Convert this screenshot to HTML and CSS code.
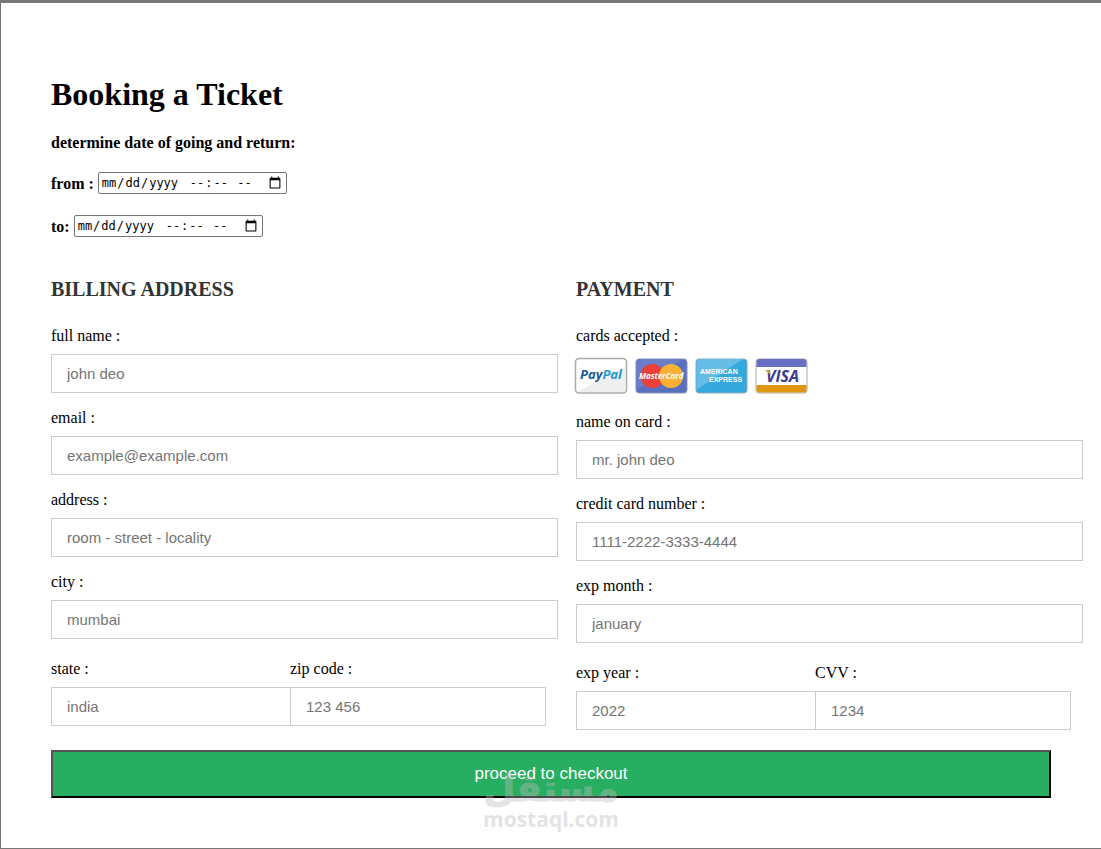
FILE: index.html
```html
<!DOCTYPE html>
<html lang="en">
<head>
<meta charset="utf-8">
<title>Booking a Ticket</title>
<link rel="stylesheet" href="styles.css">
</head>
<body>
<form class="booking">
  <h1 class="title">Booking a Ticket</h1>
  <p class="prompt">determine date of going and return:</p>
  <div class="date-row">
    <label for="from">from :</label>
    <span class="datetime"><input class="date" type="date" id="from"><input class="time" type="time" aria-label="from time"></span>
  </div>
  <div class="date-row">
    <label for="to">to:</label>
    <span class="datetime"><input class="date" type="date" id="to"><input class="time" type="time" aria-label="to time"></span>
  </div>

  <div class="columns">
    <section class="column">
      <h2 class="heading">billing address</h2>
      <div class="field"><label for="name">full name :</label><input class="box" id="name" type="text" placeholder="john deo"></div>
      <div class="field"><label for="email">email :</label><input class="box" id="email" type="email" placeholder="example@example.com"></div>
      <div class="field"><label for="address">address :</label><input class="box" id="address" type="text" placeholder="room - street - locality"></div>
      <div class="field"><label for="city">city :</label><input class="box" id="city" type="text" placeholder="mumbai"></div>
      <div class="pair">
        <div class="field"><label for="state">state :</label><input class="box" id="state" type="text" placeholder="india"></div>
        <div class="field"><label for="zip">zip code :</label><input class="box" id="zip" type="text" placeholder="123 456"></div>
      </div>
    </section>
    <section class="column">
      <h2 class="heading">payment</h2>
      <div class="field">
        <span>cards accepted :</span>
        <div class="cards">
          <svg class="card" viewBox="0 0 54 38" role="img" aria-label="PayPal">
            <rect x="1.5" y="1.5" width="51" height="34.500" rx="3.500" fill="#fff" stroke="#aaa" stroke-width="1.500"/>
            <path d="M3 35 51.500 9V32a3 3 0 0 1-3 3H5z" fill="#eee"/>
            <text class="mark paypal" x="6" y="22"><tspan fill="#1a5a9c">Pay</tspan><tspan fill="#2398cf">Pal</tspan></text>
          </svg>
          <svg class="card" viewBox="0 0 54 38" role="img" aria-label="MasterCard">
            <rect x="2" y="2" width="51" height="34" rx="3" fill="#5870bd" stroke="#8b93bd"/>
            <path d="M2.500 33V5a3 3 0 0 1 3-3H49z" fill="#6b7dc5"/>
            <circle cx="18.500" cy="19" r="12" fill="#eb4039"/><circle cx="37" cy="19" r="12" fill="#fcb034"/>
            <text class="mark master" x="5" y="22">MasterCard</text>
          </svg>
          <svg class="card" viewBox="0 0 54 38" role="img" aria-label="American Express">
            <rect x="2" y="2" width="51" height="34" rx="3" fill="#35a9dd" stroke="#8aaabb"/>
            <path d="M2.500 33V5a3 3 0 0 1 3-3H49z" fill="#64bce7"/>
            <text class="mark amex" x="6" y="17">AMERICAN</text><text class="mark amex" x="15" y="25">EXPRESS</text>
          </svg>
          <svg class="card" viewBox="0 0 54 38" role="img" aria-label="Visa">
            <rect x="2" y="2" width="51" height="34" rx="3" fill="#fff" stroke="#aaa"/>
            <path d="M2.500 10V5a3 3 0 0 1 3-3H49.500a3 3 0 0 1 3 3V10z" fill="#666fc2"/>
            <path d="M2.500 28H52.500V32.500a3 3 0 0 1-3 3H5.500a3 3 0 0 1-3-3z" fill="#df950c"/>
            <text class="mark visa" x="12" y="25">VISA</text>
            <path d="M11 13h4l2 5z" fill="#eea020"/>
          </svg>
        </div>
      </div>
      <div class="field"><label for="holder">name on card :</label><input class="box" id="holder" type="text" placeholder="mr. john deo"></div>
      <div class="field"><label for="number">credit card number :</label><input class="box" id="number" type="text" placeholder="1111-2222-3333-4444"></div>
      <div class="field"><label for="month">exp month :</label><input class="box" id="month" type="text" placeholder="january"></div>
      <div class="pair">
        <div class="field"><label for="year">exp year :</label><input class="box" id="year" type="text" placeholder="2022"></div>
        <div class="field"><label for="cvv">CVV :</label><input class="box" id="cvv" type="text" placeholder="1234"></div>
      </div>
    </section>
  </div>
  <div class="checkout">
    <button class="submit" type="submit">proceed to checkout</button>
    <div class="watermark"><span class="wm-ar" lang="ar">مستقل</span><span class="wm-en">mostaql.com</span></div>
  </div>
</form>
</body>
</html>
```
FILE: styles.css
```css
* { box-sizing: border-box; }
body {
  margin: 0;
  min-height: 100vh;
  border: solid #777;
  border-width: 3px 0 1px 1px;
  background: #fff;
  color: #000;
  font: 15px/17px "Liberation Serif", "Times New Roman", serif;
}
.booking { padding: 73px 50px 50px; font-size: 16px; }
.title { margin: 0 0 21px; font-size: 32px; line-height: 37px; }
.prompt { margin: 0 0 21px; font-weight: bold; }
.date-row { display: flex; align-items: center; gap: 4px; margin-bottom: 21px; font-weight: bold; }
.datetime {
  display: grid;
  width: 189px;
  height: 22px;
  border: 1px solid #767676;
  border-radius: 2px;
  background: #fff;
}
/* Date and time share one cell; the date's calendar icon stays at the far end. */
.date, .time {
  grid-area: 1 / 1;
  min-width: 0;
  height: 20px;
  margin: 0;
  padding: 0 2px;
  border: 0;
  background: transparent;
  color: #000;
  font: 12px "DejaVu Sans Mono", monospace;
}
.date { width: 100%; }
.date::-webkit-calendar-picker-indicator { width: 14px; height: 14px; padding: 0; margin-right: 2px; }
.time { justify-self: start; margin-left: 88px; }
.time::-webkit-calendar-picker-indicator { display: none; }
.columns {
  display: grid;
  grid-template-columns: 1fr 1fr;
  gap: 18px;
  margin: 41px -32px 20px 0;
}
.heading {
  margin: 0 0 26px;
  color: #333;
  font-size: 20px;
  line-height: 23px;
  text-transform: uppercase;
}
.field { display: flex; flex-direction: column; gap: 10px; margin-bottom: 16px; }
.box {
  width: 100%;
  height: 39px;
  padding: 10px 15px;
  border: 1px solid #ccc;
  border-radius: 0;
  font: 15px "Liberation Sans", Arial, sans-serif;
}
.box::placeholder { color: #757575; }
.pair { display: grid; grid-template-columns: 239fr 256fr; margin: 21px 12px 0 0; }
.pair .field { margin-bottom: 0; }
.pair .field:first-child .box { border-right: 0; }
.cards { display: flex; gap: 6px; height: 43px; padding-top: 3px; margin-left: -2px; }
.card { width: 54px; height: 38px; }
.mark { font-family: "Open Sans", sans-serif; font-style: italic; font-weight: bold; }
.paypal { font-size: 13px; }
.master { font-size: 8px; fill: #fff; }
.amex { font-family: "Liberation Sans", sans-serif; font-size: 7px; font-style: normal; fill: #fff; }
.visa { font-size: 16px; fill: #3c3c94; }
.checkout { position: relative; }
.submit {
  display: block;
  width: 100%;
  height: 48px;
  border: 2px outset #000;
  border-radius: 0;
  background: #27ae60;
  color: #fff;
  font: 17px "Liberation Sans", Arial, sans-serif;
}
.watermark {
  position: absolute;
  top: 20px;
  left: 0;
  right: 0;
  display: flex;
  flex-direction: column;
  align-items: center;
  color: #bbb;
  opacity: 0.4;
  pointer-events: none;
}
.wm-ar { font: bold 37px/38px "DejaVu Sans", sans-serif; -webkit-text-stroke: 1px #bbb; }
.wm-en { font: bold 21px/22px "Open Sans", sans-serif; }
```
